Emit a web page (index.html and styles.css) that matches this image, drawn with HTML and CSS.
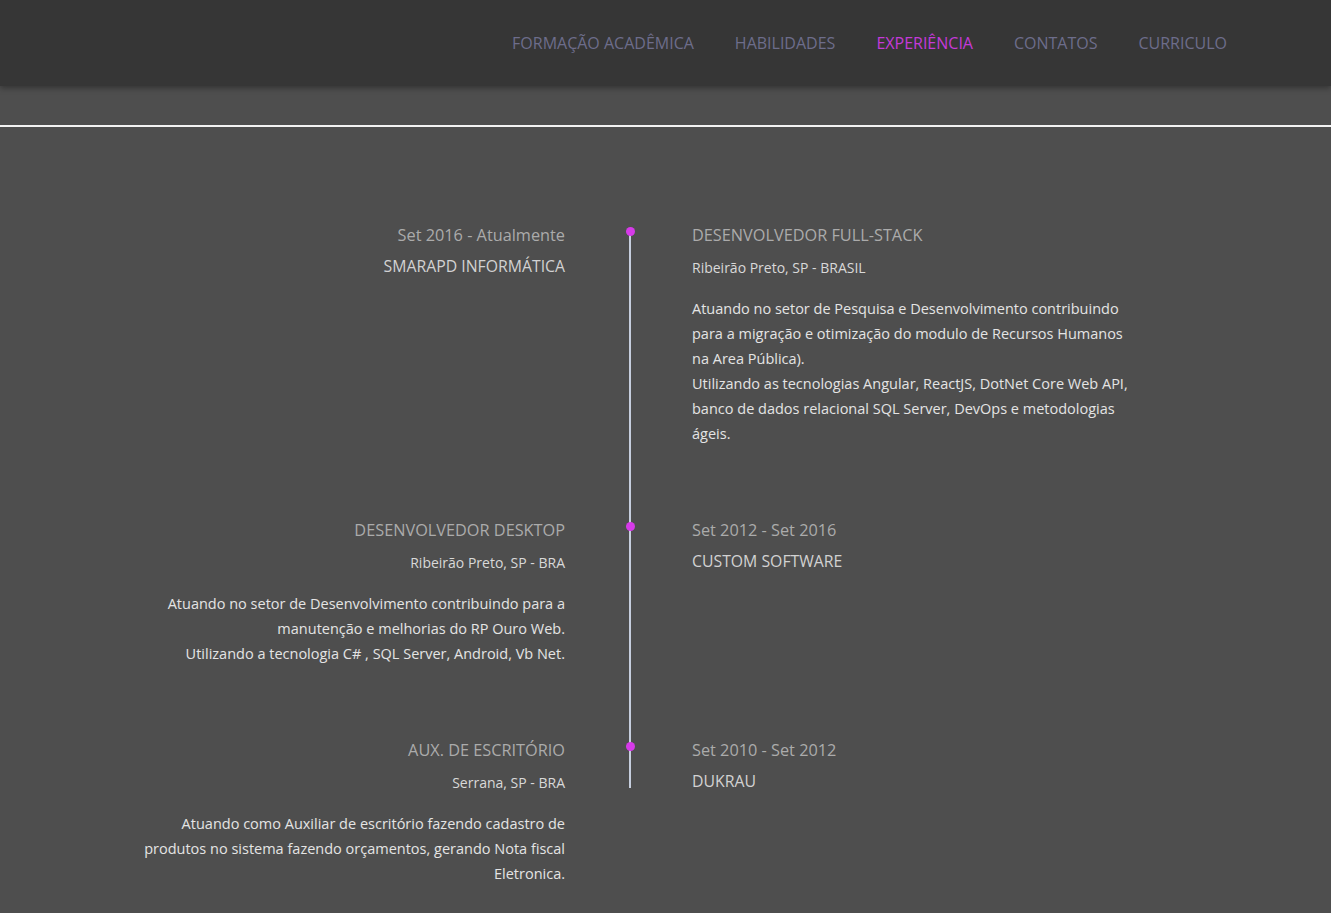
FILE: index.html
```html
<!DOCTYPE html>
<html lang="pt-BR">
<head>
<meta charset="utf-8">
<title>Experiência</title>
<link rel="stylesheet" href="styles.css">
</head>
<body>
<header class="topbar">
  <nav class="nav">
    <a class="nav-link" href="#">FORMAÇÃO ACADÊMICA</a>
    <a class="nav-link" href="#">HABILIDADES</a>
    <a class="nav-link active" href="#">EXPERIÊNCIA</a>
    <a class="nav-link" href="#">CONTATOS</a>
    <a class="nav-link" href="#">CURRICULO</a>
  </nav>
</header>
<main class="page">
  <hr class="divider">
  <section class="timeline">
    <div class="tl-row first">
      <div class="tl-side left">
        <div class="tl-title">Set 2016 - Atualmente</div>
        <div class="tl-company">SMARAPD INFORMÁTICA</div>
      </div>
      <div class="tl-axis"><span class="tl-line"></span><span class="tl-dot"></span></div>
      <div class="tl-side right">
        <div class="tl-title">DESENVOLVEDOR FULL-STACK</div>
        <div class="tl-place">Ribeirão Preto, SP - BRASIL</div>
        <p class="tl-text">Atuando no setor de Pesquisa e Desenvolvimento contribuindo para a migração e otimização do modulo de Recursos Humanos na Area Pública).<br>Utilizando as tecnologias Angular, ReactJS, DotNet Core Web API, banco de dados relacional SQL Server, DevOps e metodologias ágeis.</p>
      </div>
    </div>
    <div class="tl-row">
      <div class="tl-side left">
        <div class="tl-title">DESENVOLVEDOR DESKTOP</div>
        <div class="tl-place">Ribeirão Preto, SP - BRA</div>
        <p class="tl-text">Atuando no setor de Desenvolvimento contribuindo para a manutenção e melhorias do RP Ouro Web.<br>Utilizando a tecnologia C# , SQL Server, Android, Vb Net.</p>
      </div>
      <div class="tl-axis"><span class="tl-line"></span><span class="tl-dot"></span></div>
      <div class="tl-side right">
        <div class="tl-title">Set 2012 - Set 2016</div>
        <div class="tl-company">CUSTOM SOFTWARE</div>
      </div>
    </div>
    <div class="tl-row last">
      <div class="tl-side left">
        <div class="tl-title">AUX. DE ESCRITÓRIO</div>
        <div class="tl-place">Serrana, SP - BRA</div>
        <p class="tl-text">Atuando como Auxiliar de escritório fazendo cadastro de produtos no sistema fazendo orçamentos, gerando Nota fiscal Eletronica.</p>
      </div>
      <div class="tl-axis"><span class="tl-line"></span><span class="tl-dot"></span></div>
      <div class="tl-side right">
        <div class="tl-title">Set 2010 - Set 2012</div>
        <div class="tl-company">DUKRAU</div>
      </div>
    </div>
  </section>
</main>
</body>
</html>
```

FILE: styles.css
```css
* { box-sizing: border-box; }
html, body { margin: 0; padding: 0; }
body {
  background: #4e4e4e;
  font-family: "Open Sans", "Noto Sans", sans-serif;
  color: #e2e2e2;
}
.topbar {
  height: 86px;
  background: #363636;
  box-shadow: 0 2px 6px rgba(0,0,0,0.35);
  display: flex;
  justify-content: flex-end;
  align-items: center;
  padding-right: 104px;
  padding-bottom: 1px;
  position: relative;
  z-index: 2;
}
.nav { display: flex; gap: 41px; }
.nav-link {
  color: #6d6d8b;
  text-decoration: none;
  font-size: 16px;
}
.nav-link.active { color: #c43ad9; }
.page { padding-top: 39px; }
.divider {
  margin: 0;
  border: 0;
  height: 1.5px;
  background: #f2f2f2;
}
.timeline {
  margin-left: 120px;
  padding-top: 96px;
  width: 1017px;
}
.tl-row {
  display: grid;
  grid-template-columns: 445px 127px 445px;
}
.tl-side { padding-bottom: 72px; }
.last .tl-side { padding-bottom: 14px; }
.tl-side.left { text-align: right; }
.tl-title {
  font-size: 16.3px;
  line-height: 24px;
  color: #ababab;
}
.tl-company {
  margin-top: 7px;
  font-size: 15.8px;
  line-height: 24px;
  color: #d2d2d2;
}
.tl-place {
  margin-top: 11px;
  font-size: 14px;
  line-height: 20px;
  color: #d9d9d9;
}
.tl-text {
  margin: 18px 0 0;
  font-size: 14.5px;
  line-height: 25px;
  color: #e4e4e4;
}
.tl-axis {
  position: relative;
  display: flex;
  padding-left: 64px;
}
.tl-line {
  width: 2px;
  background: #c6cede;
}
.first .tl-line { margin-top: 9px; }
.last .tl-line { align-self: flex-start; height: 50px; }
.tl-dot {
  position: absolute;
  left: 60.5px;
  top: 4.5px;
  width: 9px;
  height: 9px;
  border-radius: 50%;
  background: #d63ae9;
}
```
